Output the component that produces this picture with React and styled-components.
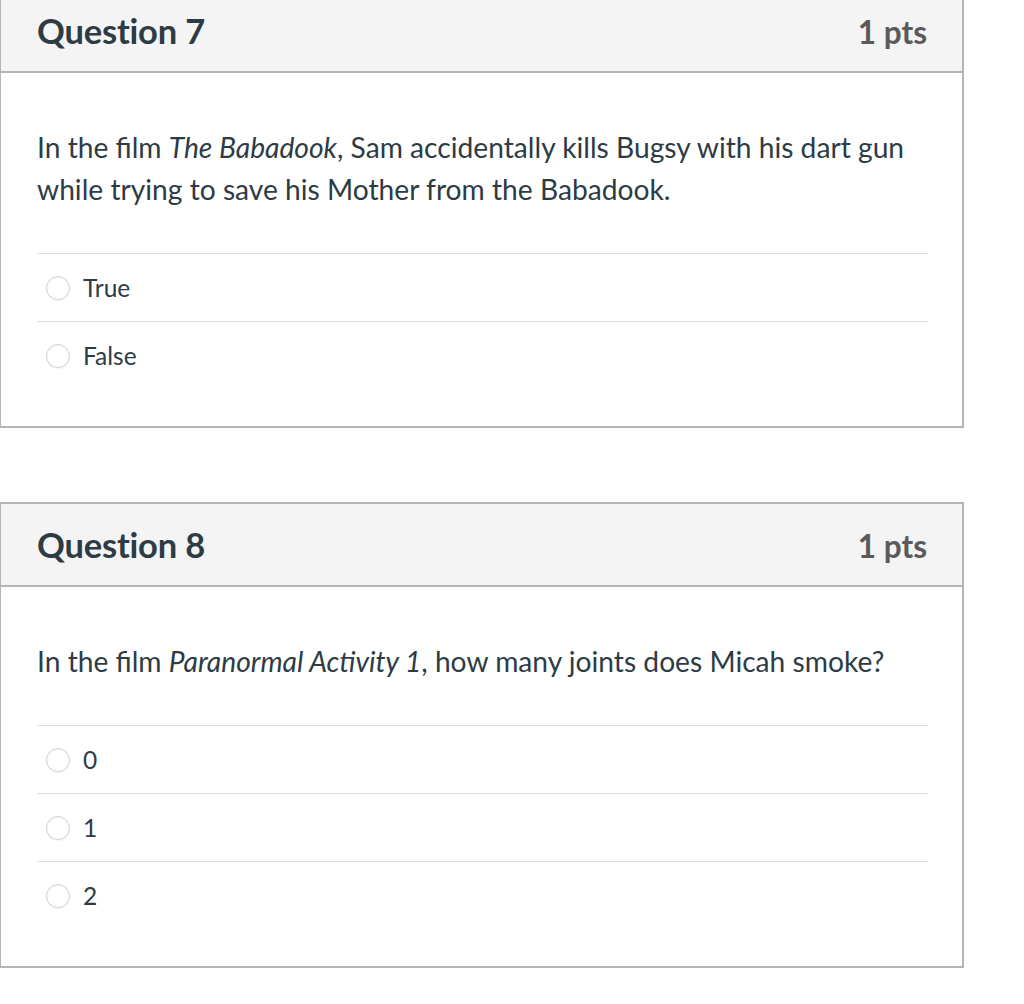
import React from 'react';
import styled, { createGlobalStyle } from 'styled-components';

const GlobalStyle = createGlobalStyle`
  body {
    margin: 0;
    background: #fff;
    font-family: Lato, "Open Sans", sans-serif;
    color: #2d3b45;
  }
`;

const Page = styled.div`
  display: flex;
  flex-direction: column;
  gap: 74px;
  width: 964px;
  margin-top: -12px;
`;

const Card = styled.div`
  border: 2px solid #b5b5b5;
  border-left-width: 1px;
  background: #fff;
`;

const Header = styled.div`
  display: flex;
  justify-content: space-between;
  align-items: baseline;
  background: #f4f4f4;
  border-bottom: 2px solid #b5b5b5;
  padding: 18px 35px 18px 36px;
  height: 45px;
  line-height: 45px;
`;

const Title = styled.h2`
  margin: 0;
  font-size: 34.5px;
  font-weight: 700;
  color: #2d3b45;
  letter-spacing: -0.2px;
`;

const Points = styled.span`
  font-size: 31.5px;
  font-weight: 700;
  color: #5a5a5a;
`;

const Body = styled.div`
  padding: 53px 34px 37px 36px;
`;

const Prompt = styled.p`
  margin: 0 0 43px;
  font-size: 28.2px;
  line-height: 42px;
  color: #2d3b45;
`;

const Answer = styled.label`
  display: flex;
  align-items: center;
  height: 67px;
  border-top: 1px solid #dcdcdc;
  padding-left: 9px;
  font-size: 24.5px;
  color: #2d3b45;
`;

const Radio = styled.span`
  width: 22px;
  height: 22px;
  border-radius: 50%;
  border: 1px solid #d2d2d2;
  box-shadow: inset 0 1px 2px rgba(0, 0, 0, 0.06), 0 1px 1px rgba(0, 0, 0, 0.05);
  background: #fff;
  margin-right: 13px;
  flex-shrink: 0;
`;

const questions = [
  {
    title: 'Question 7',
    prompt: (
      <>
        In the film <em>The Babadook</em>, Sam accidentally kills Bugsy with his dart gun
        while trying to save his Mother from the Babadook.
      </>
    ),
    answers: ['True', 'False'],
  },
  {
    title: 'Question 8',
    prompt: (
      <>
        In the film <em>Paranormal Activity 1</em>, how many joints does Micah smoke?
      </>
    ),
    answers: ['0', '1', '2'],
  },
];

export default function App() {
  return (
    <>
      <GlobalStyle />
      <Page>
        {questions.map((q) => (
          <Card key={q.title}>
            <Header>
              <Title>{q.title}</Title>
              <Points>1 pts</Points>
            </Header>
            <Body>
              <Prompt>{q.prompt}</Prompt>
              {q.answers.map((a) => (
                <Answer key={a}>
                  <Radio />
                  {a}
                </Answer>
              ))}
            </Body>
          </Card>
        ))}
      </Page>
    </>
  );
}
